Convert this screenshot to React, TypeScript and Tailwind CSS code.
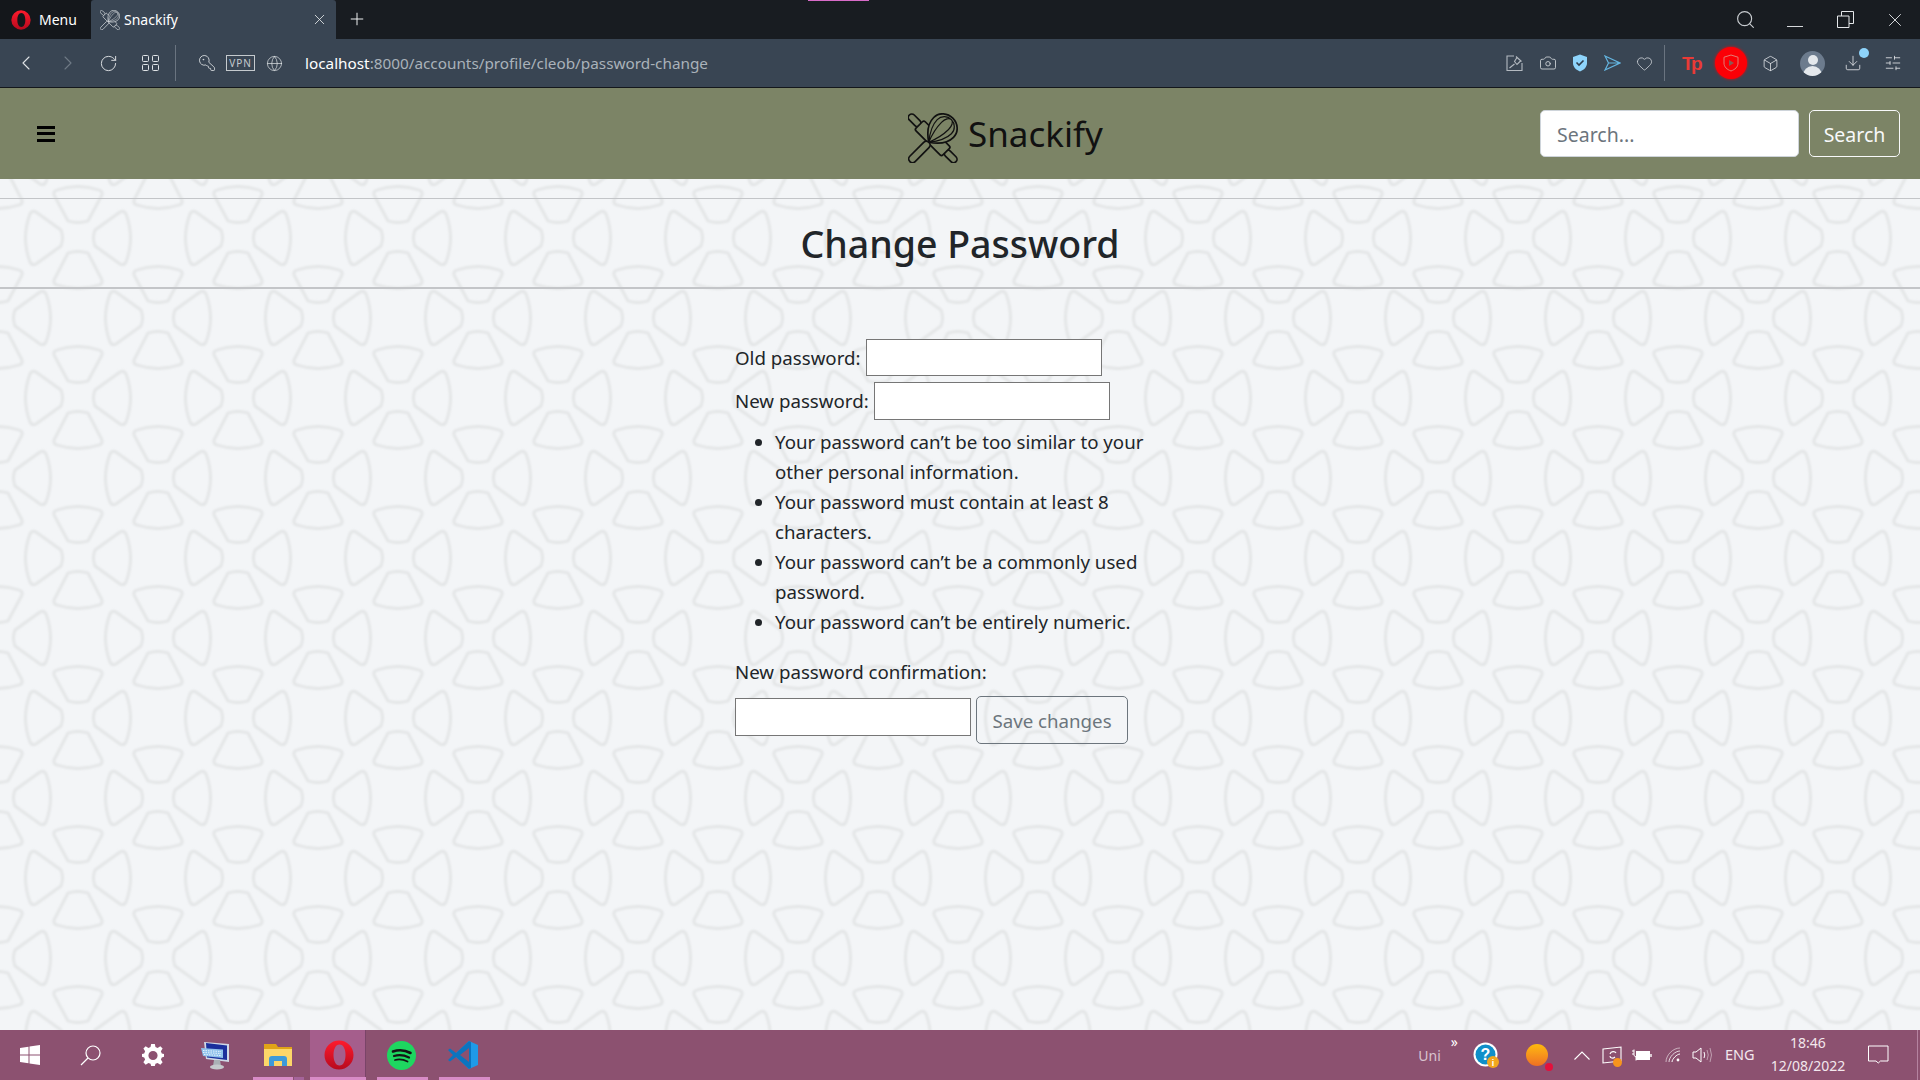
import React from 'react';
import { Camera, ChevronLeft, ChevronRight, Download, Globe, Heart, Box, KeyRound, Plus, RotateCw, Search, SlidersHorizontal, X } from 'lucide-react';

const Logo: React.FC<{ size: number; fill: string; className?: string }> = ({ size, fill, className }) => (
  <svg width={size} height={size} viewBox="-1 -1 50 50" fill="none" stroke="currentColor" strokeWidth="1.7" className={className}>
    <g transform="rotate(45 24 24)">
      <rect x="-9" y="21" width="15" height="7" rx="3.5" fill={fill} />
      <rect x="42" y="21" width="15" height="7" rx="3.5" fill={fill} />
      <rect x="5" y="18" width="38" height="13" rx="2" fill={fill} />
    </g>
    <g transform="rotate(-45 24 24)">
      <rect x="-9" y="20.5" width="27" height="7.5" rx="3.7" fill={fill} />
      <path d="M18 24C26 12 34 10 39 10C47 10 52 17 52 24C52 31 47 38 39 38C34 38 26 36 18 24Z" fill={fill} />
      <path d="M18 24C28 16 35 14 40 14C46 14 50 19 50 24M18 24C28 20 36 19 41 19C46 19 50 21 50 24M18 24C28 28 36 29 41 29C46 29 50 27 50 24M18 24C28 32 35 34 40 34C46 34 50 29 50 24" strokeWidth="1.2" />
    </g>
  </svg>
);

const PatternBackground: React.FC = () => {
  const shapes = (cx: number, cy: number) => (
    <g transform={`translate(${cx} ${cy})`}>
      <path d="M17 -8L42 -26Q46 -28 48 -24Q57 0 48 24Q46 28 42 26L17 8Q14 0 17 -8Z" />
      <path d="M-17 -8L-42 -26Q-46 -28 -48 -24Q-57 0 -48 24Q-46 28 -42 26L-17 8Q-14 0 -17 -8Z" />
      <path d="M-10 -17Q0 -14 10 -17L24 -43Q25 -47 21 -48Q0 -55 -21 -48Q-25 -47 -24 -43Z" />
      <path d="M-10 15Q0 12 10 15L24 42Q25 46 21 47Q0 54 -21 47Q-25 46 -24 42Z" />
    </g>
  );
  return (
    <svg className="absolute inset-0 h-full w-full pointer-events-none" aria-hidden="true">
      <defs>
        <filter id="soft"><feGaussianBlur stdDeviation="0.9" /></filter>
        <pattern id="tile" width="160" height="160" patternUnits="userSpaceOnUse">
          <g fill="none" stroke="#e3e5e6" strokeWidth="2.8" filter="url(#soft)">
            {[-160, 0, 160].map((dx) =>
              [-160, 0, 160].map((dy) => (
                <g key={`${dx}-${dy}`}>
                  {shapes(78 + dx, 59 + dy)}
                  {shapes(158 + dx, 139 + dy)}
                </g>
              ))
            )}
          </g>
        </pattern>
      </defs>
      <rect width="100%" height="100%" fill="url(#tile)" />
    </svg>
  );
};

const OperaLogo: React.FC<{ size: number; id: string }> = ({ size, id }) => (
  <svg width={size} height={size} viewBox="0 0 30 30">
    <defs>
      <linearGradient id={id} x1="0" y1="0" x2="0" y2="1">
        <stop offset="0" stopColor="#ff1b2d" />
        <stop offset="1" stopColor="#b70a1e" />
      </linearGradient>
    </defs>
    <path fillRule="evenodd" fill={`url(#${id})`} d="M15 0.500A14.500 14.500 0 1 0 15 29.500A14.500 14.500 0 1 0 15 0.500ZM15.500 4.500C19.500 4.500 21.500 9.500 21.500 15C21.500 20.500 19.500 25.500 15.500 25.500C11.500 25.500 9.500 20.500 9.500 15C9.500 9.500 11.500 4.500 15.500 4.500Z" />
  </svg>
);

const ChromeIcons = () => (
  <div className="flex items-center">
    <svg width="17" height="16" viewBox="0 0 17 16" fill="none" stroke="#b4bac1" strokeWidth="1.1" className="ml-[1506px]">
      <path d="M8 1H1V15.5H16V8" />
      <path d="M10 1.5L15.5 6.5M11 2.5L8.5 6.5L11 9.5L14.5 6M8.5 9L3.5 13" />
    </svg>
    <Camera size={18} strokeWidth={1.1} color="#d5d9dd" className="ml-[16px]" />
    <svg width="16" height="18" viewBox="0 0 16 18" className="ml-[15px]">
      <path d="M8 0.5L15 3V9C15 13 12 16 8 17.5C4 16 1 13 1 9V3Z" fill="#8ed4fb" />
      <path d="M4.5 8.5L7 11L11.5 6.5" fill="none" stroke="#2f3d4c" strokeWidth="1.6" />
    </svg>
    <svg width="17" height="16" viewBox="0 0 17 16" fill="none" stroke="#64b5e0" strokeWidth="1.2" className="ml-[16px]">
      <path d="M1 1L16 8L1 15L4.5 8ZM4.5 8H16" />
    </svg>
    <Heart size={17} strokeWidth={1.1} color="#d5d9dd" className="ml-[15px]" />
    <div className="ml-[11px] w-px h-[36px] bg-[#6a7480]" />
    <span className="ml-[17px] w-[19px] font-['Liberation_Sans'] font-bold text-[19px] leading-none tracking-[-2.5px] text-[#ea3a36]">Tp</span>
    <div className="ml-[14px] w-[32px] h-[32px] rounded-full bg-[#fb0006] shadow-[0_0_3px_#fb0006] flex items-center justify-center">
      <svg width="16" height="18" viewBox="0 0 16 18" fill="none" stroke="#e37d75" strokeWidth="1">
        <path d="M8 1L15 3.2V9C15 13 12 15.5 8 17C4 15.5 1 13 1 9V3.2Z" />
        <path d="M6 6L11 9L6 12Z" fill="#8a5a55" stroke="none" />
      </svg>
    </div>
    <Box size={17} strokeWidth={1.1} color="#e4e7ea" className="ml-[15px]" />
    <div className="ml-[21px] w-[25px] h-[25px] rounded-full bg-[#6c7b8d] overflow-hidden flex flex-col items-center">
      <div className="mt-[4px] w-[10px] h-[10px] rounded-full bg-[#e4e8ec]" />
      <div className="mt-[1px] w-[19px] h-[10px] rounded-t-full bg-[#e4e8ec]" />
    </div>
    <div className="relative ml-[19px]">
      <Download size={18} strokeWidth={1.1} color="#e4e7ea" />
      <span className="absolute -right-[7px] -top-[6px] w-[10px] h-[10px] rounded-full bg-[#8ed4fb]" />
    </div>
    <SlidersHorizontal size={18} strokeWidth={1.1} color="#e4e7ea" className="ml-[22px]" />
  </div>
);

const Taskbar = () => (
  <div className="relative h-[50px] bg-[#8c5170] flex items-center text-white font-['Noto_Sans'] shrink-0">
    <svg width="20" height="20" viewBox="0 0 20 20" fill="#fff" className="ml-[20px]">
      <path d="M0 3L8.5 1.8V9.5H0ZM9.5 1.6L20 0V9.5H9.5ZM0 10.5H8.5V18.2L0 17ZM9.5 10.5H20V20L9.5 18.4Z" />
    </svg>
    <svg width="21" height="21" viewBox="0 0 21 21" fill="none" stroke="#fff" strokeWidth="1.2" className="ml-[40px]">
      <circle cx="13" cy="8" r="7" />
      <path d="M8 13L1 20" />
    </svg>
    <svg width="22" height="22" viewBox="0 0 24 24" fill="#fff" className="ml-[41px]">
      <path fillRule="evenodd" d="M10 0H14L14.7 3.4L17 4.4L20 2.5L22.5 5L20.6 8L21.6 10.3L24 11V14L21.6 14.7L20.6 17L22.5 20L20 22.5L17 20.6L14.7 21.6L14 24H10L9.3 21.6L7 20.6L4 22.5L1.5 20L3.4 17L2.4 14.7L0 14V11L2.4 10.3L3.4 8L1.5 5L4 2.5L7 4.4L9.3 3.4ZM12 7.5A5 5 0 1 0 12 17.5A5 5 0 1 0 12 7.5Z" />
    </svg>
    <svg width="30" height="30" viewBox="0 0 30 30" className="ml-[36px]">
      <path d="M4 2L29 4V22L6 19Z" fill="#cfd8e6" />
      <path d="M6 3L27 5.500V20L7 17.500Z" fill="#1a2f9c" />
      <path d="M1 8L23 9.500V18L3 16Z" fill="#8fc2ec" />
      <path d="M3 10.500L21 11.500M3 12.500L21 13.500M4 14.500L21 15.500" stroke="#fff" strokeWidth="0.8" strokeDasharray="1.5 1" />
      <path d="M14 20H20L21 26H13Z" fill="#aab0b5" />
      <ellipse cx="17" cy="27" rx="7" ry="2.5" fill="#c5c9cc" />
    </svg>
    <svg width="28" height="24" viewBox="0 0 28 24" className="ml-[34px]">
      <path d="M0 1H12L14 4H28V23H0Z" fill="#e0a418" />
      <path d="M0 6H28V23H0Z" fill="#fcd669" />
      <path d="M5 23V16Q5 13 8 13H20Q23 13 23 16V23H18V18H10V23Z" fill="#3d9ad9" />
      <path d="M10 18H18V23H10Z" fill="#fcd669" />
    </svg>
    <div className="ml-[18px] w-[56px] h-full pl-[2px] bg-[#a55e8c] flex items-center justify-center relative border-r border-[#7a4468]">
      <OperaLogo size={30} id="opera-task" />
    </div>
    <svg width="29" height="29" viewBox="0 0 29 29" fill="none" stroke="#141414" strokeLinecap="round" className="ml-[21px]">
      <circle cx="14.5" cy="14.5" r="14.5" fill="#1ed760" stroke="none" />
      <path d="M6 10.5C12 8.5 18 9 23.5 12" strokeWidth="2.6" />
      <path d="M7 15C12 13.5 17 14 22 16.5" strokeWidth="2.2" />
      <path d="M8 19C12 18 16.500 18.500 20.500 20.500" strokeWidth="1.8" />
    </svg>
    <svg width="30" height="30" viewBox="0 0 30 30" className="ml-[32px]">
      <path d="M21 1L30 5V25L21 29L6 15Z" fill="#1f9ae8" />
      <path d="M21 1L8 13L2 8.500L0 10L5 15L0 20L2 21.500L8 17L21 29L23 28V2Z" fill="#0b74bf" />
      <path d="M21 8V22L12 15Z" fill="#8c5170" />
    </svg>
    <div className="ml-auto flex items-center h-full relative">
      <span className="text-[14px] text-[#d9c3cf] mr-[10px]">Uni</span>
      <span className="text-[14px] leading-none mb-[26px] mr-[15px]">»</span>
      <svg width="26" height="26" viewBox="0 0 26 26" className="mr-[27px]">
        <circle cx="12.5" cy="12.5" r="12" fill="#fff" />
        <circle cx="12.5" cy="12.500" r="10" fill="#0f8fc9" />
        <text x="12.5" y="18" textAnchor="middle" fontFamily="Liberation Sans" fontWeight="700" fontSize="16" fill="#fff">?</text>
        <circle cx="20" cy="20" r="6" fill="#f2a71e" />
        <text x="20" y="23.500" textAnchor="middle" fontFamily="Liberation Sans" fontWeight="700" fontSize="9" fill="#fff">i</text>
      </svg>
      <div className="relative mr-[26px] w-[22px] h-[22px] rounded-full bg-gradient-to-b from-[#fdb90a] to-[#ee6f22]">
        <span className="absolute -right-[5px] -bottom-[5px] w-[8px] h-[8px] rounded-full bg-[#e3103c]" />
      </div>
      <svg width="16" height="9" viewBox="0 0 16 9" fill="none" stroke="#fff" strokeWidth="1.1" className="mr-[12px]">
        <path d="M0.500 8.500L8 1L15.500 8.500" />
      </svg>
      <div className="relative mr-[10px]">
        <svg width="20" height="18" viewBox="0 0 20 18" fill="none" stroke="#fff" strokeWidth="1.1">
          <path d="M1 3L19 1V15L1 17ZM8 8C9 5 13 5 14 7M13 11C11 13 8 12 8 10" />
        </svg>
        <span className="absolute -right-[0px] -bottom-[3px] w-[9px] h-[9px] rounded-full bg-[#f7941d]" />
      </div>
      <svg width="20" height="12" viewBox="0 0 20 12" fill="none" stroke="#fff" className="mr-[13px]">
        <path d="M0 2H2M0 5H2M2 0.500V6.500L4 8V11.500" strokeWidth="1" />
        <rect x="4.500" y="2.500" width="13" height="8" strokeWidth="1" fill="#fff" />
        <path d="M19 5V8" strokeWidth="1.400" />
      </svg>
      <svg width="16" height="16" viewBox="0 0 16 16" fill="none" stroke="#fff" strokeWidth="1" className="mr-[11px]">
        <path d="M1 15C1 8 8 1 15 1" opacity="0.55" />
        <path d="M4 15C4 10 10 4 15 4" opacity="0.75" />
        <path d="M7 15C7 12 12 7 15 7" />
        <circle cx="13" cy="13" r="1.400" fill="#fff" stroke="none" />
      </svg>
      <svg width="21" height="16" viewBox="0 0 21 16" fill="none" stroke="#fff" strokeWidth="1" className="mr-[12px]">
        <path d="M1 5H4L9 1V15L4 11H1Z" />
        <path d="M12 5Q13.500 8 12 11" />
        <path d="M15 3Q17.500 8 15 13M18 1Q21 8 18 15" opacity="0.45" />
      </svg>
      <span className="text-[14.5px] w-[29px] mr-[14px] text-[#f3e7ed] whitespace-nowrap">ENG</span>
      <div className="w-[80px] text-center text-[14px] leading-[23px] mr-[20px] mb-[2px] text-[#f3e7ed]">
        <div>18:46</div>
        <div>12/08/2022</div>
      </div>
      <svg width="21" height="20" viewBox="0 0 21 20" fill="none" stroke="#fff" strokeWidth="1" className="mr-[31px]">
        <path d="M0.500 1H20V16H12.500L10.250 18L8 16H0.500Z" />
      </svg>
      <div className="absolute right-[2px] top-0 bottom-0 w-px bg-[#b583a0]" />
    </div>
    <div className="absolute bottom-0 left-[253px] w-[40px] h-[3px] bg-[#d88bc6]" />
    <div className="absolute bottom-0 left-[294px] w-[10px] h-[3px] bg-[#a5649a]" />
    <div className="absolute bottom-0 left-[310px] w-[56px] h-[3px] bg-[#d88bc6]" />
    <div className="absolute bottom-0 left-[377px] w-[51px] h-[3px] bg-[#d88bc6]" />
    <div className="absolute bottom-0 left-[439px] w-[51px] h-[3px] bg-[#d88bc6]" />
  </div>
);

const App: React.FC = () => {
  const hints = [
    "Your password can’t be too similar to your other personal information.",
    "Your password must contain at least 8 characters.",
    "Your password can’t be a commonly used password.",
    "Your password can’t be entirely numeric.",
  ];

  return (
    <div className="h-[1080px] w-[1920px] flex flex-col overflow-hidden font-['Noto_Sans',sans-serif] text-[#212529]">
      {/* opera tabs */}
      <div className="relative h-[39px] bg-[#181c21] flex shrink-0 font-['Noto_Sans']">
        <div className="absolute top-0 left-[808px] w-[61px] h-px bg-[#d76bc8]" />
        <div className="w-[91px] flex items-center pl-[11px] gap-[8px] bg-[#14171b]">
          <OperaLogo size={20} id="opera-menu" />
          <span className="text-[14px] text-white">Menu</span>
        </div>
        <div className="w-[245px] bg-[#394553] rounded-t-[3px] flex items-center pl-[9px] text-white">
          <Logo size={20} fill="#394553" className="text-[#d9dde1]" />
          <span className="ml-[4px] text-[14px]">Snackify</span>
          <X size={17} strokeWidth={1.2} className="ml-auto mr-[8px] text-[#e5e8ea]" />
        </div>
        <Plus size={20} strokeWidth={1.2} className="ml-[11px] mt-[9px] text-[#eef0f2]" />
        <div className="ml-auto flex items-center text-[#e4e7ea]">
          <Search size={21} strokeWidth={1.3} color="#c8ccd0" />
          <div className="ml-[31px] mt-[14px] w-[16px] h-px bg-[#d5d8db]" />
          <svg width="17" height="17" viewBox="0 0 17 17" fill="none" stroke="#e4e7ea" strokeWidth="1" className="ml-[34px]">
            <path d="M0.500 5H12V16.500H0.500ZM4.500 5V0.500H16.500V12.500H12" />
          </svg>
          <X size={22} strokeWidth={1} className="ml-[30px] mr-[14px]" />
        </div>
      </div>

      {/* address bar */}
      <div className="relative h-[49px] bg-[#394553] border-b border-[#14171b] flex items-center shrink-0 font-['Noto_Sans']">
        <ChevronLeft size={24} strokeWidth={1.1} color="#dfe3e6" className="ml-[14px]" />
        <ChevronRight size={24} strokeWidth={1.1} color="#6f7a86" className="ml-[18px]" />
        <RotateCw size={19} strokeWidth={1.2} color="#dfe3e6" className="ml-[19px]" />
        <svg width="17" height="16" viewBox="0 0 17 16" fill="none" stroke="#dfe3e6" strokeWidth="1" className="ml-[24px]">
          <rect x="0.500" y="0.500" width="6" height="6" rx="1" />
          <rect x="10.500" y="0.500" width="6" height="6" rx="1" />
          <rect x="0.500" y="9.500" width="6" height="6" rx="1" />
          <rect x="10.500" y="9.500" width="6" height="6" rx="1" />
        </svg>
        <div className="ml-[16px] w-px h-[36px] bg-[#6a7480]" />
        <KeyRound size={18} strokeWidth={1.1} color="#dfe3e6" className="ml-[22px] -scale-x-100" />
        <span className="ml-[10px] w-[29px] h-[16px] border border-[#c5cace] text-[10px] leading-[14px] text-center text-[#c5cace] tracking-[1px]">VPN</span>
        <Globe size={17} strokeWidth={1} color="#dfe3e6" className="ml-[11px]" />
        <span className="ml-[22px] pt-[1px] text-[15.3px] text-[#aab2ba]"><span className="text-white">localhost</span>:8000/accounts/profile/cleob/password-change</span>
        <div className="absolute left-0 top-0 bottom-0 flex items-center">
          <ChromeIcons />
        </div>
      </div>

      {/* navbar */}
      <nav className="h-[91px] bg-[#7c8466] flex items-center shrink-0 relative">
        <div className="ml-[37px] w-[18px] flex flex-col gap-[3.500px]">
          <div className="h-[3px] bg-black" />
          <div className="h-[3px] bg-black" />
          <div className="h-[3px] bg-black" />
        </div>
        <div className="absolute left-[908px] top-[25px] flex items-center text-[#111]">
          <Logo size={50} fill="#7c8466" />
          <span className="ml-[10px] mb-[10px] text-[35px] leading-none">Snackify</span>
        </div>
        <div className="ml-auto flex items-center gap-[10px] mr-[20px]">
          <div className="w-[259px] h-[47px] bg-white rounded-[5px] border border-[#ced4da] px-[16px] pt-[2px] flex items-center text-[19.500px] text-[#6c757d]">Search...</div>
          <button className="w-[91px] h-[47px] rounded-[5px] pt-[2px] border border-[#f8f9fa] text-[19.500px] text-[#f8f9fa]">Search</button>
        </div>
      </nav>

      {/* page */}
      <main className="relative flex-1 bg-[#f3f5f7] min-h-0">
        <PatternBackground />
        <div className="relative">
          <div className="pt-[19px]">
            <div className="h-px bg-[#c3c5c8]" />
          </div>
          <h1 className="h-[88px] pt-[2px] flex items-center justify-center text-[37.500px] font-medium leading-none">Change Password</h1>
          <div className="h-[2px] bg-[#c3c5c8]" />

          <form className="mt-[50px] ml-[735px] w-[420px] text-[18.7px] leading-[30px]">
            <div className="flex items-center gap-[5px] h-[37px]">
              <label>Old password:</label>
              <div className="w-[236px] h-[37px] bg-white border border-[#767676]" />
            </div>
            <div className="flex items-center gap-[5px] h-[38px] mt-[6px]">
              <label>New password:</label>
              <div className="w-[236px] h-[38px] bg-white border border-[#767676]" />
            </div>
            <ul className="list-disc pl-[40px] mt-[7px] w-[425px]">
              {hints.map((hint) => (
                <li key={hint}>{hint}</li>
              ))}
            </ul>
            <p className="mt-[20px]">New password confirmation:</p>
            <div className="flex items-center gap-[5px] mt-[9px]">
              <div className="w-[236px] h-[38px] mb-[6px] bg-white border border-[#767676]" />
              <button type="button" className="w-[152px] h-[48px] pt-[1px] rounded-[5px] border border-[#6c757d] text-[#6c757d]">Save changes</button>
            </div>
          </form>
        </div>
      </main>

      <Taskbar />
    </div>
  );
};

export default App;
